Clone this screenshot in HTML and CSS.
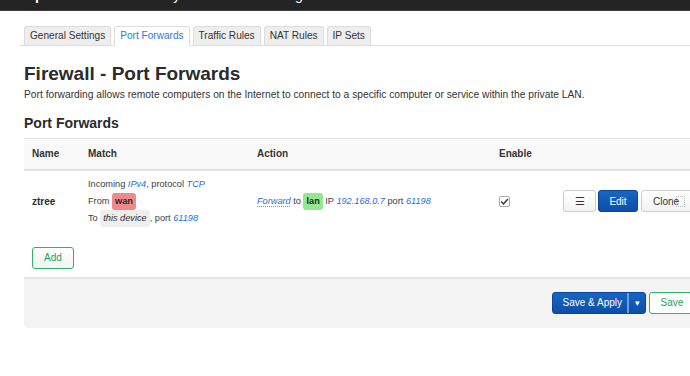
FILE: index.html
```html
<!DOCTYPE html>
<html lang="en">
<head>
<meta charset="utf-8">
<title>Firewall - Port Forwards</title>
<link rel="stylesheet" href="styles.css">
</head>
<body>
<header class="topbar">
  <span class="brand">OpenWrt</span>
  <span class="nav-item nav-system">System</span>
  <span class="nav-item nav-logout">Logout</span>
</header>
<div class="main">
  <ul class="tabs">
    <li class="tab">General Settings</li>
    <li class="tab active">Port Forwards</li>
    <li class="tab">Traffic Rules</li>
    <li class="tab">NAT Rules</li>
    <li class="tab">IP Sets</li>
  </ul>
  <h2 class="page-title">Firewall - Port Forwards</h2>
  <p class="page-desc">Port forwarding allows remote computers on the Internet to connect to a specific computer or service within the private LAN.</p>
  <h3 class="section-title">Port Forwards</h3>
  <table class="table">
    <colgroup>
      <col class="c-name"><col class="c-match"><col class="c-action"><col class="c-enable"><col class="c-btns">
    </colgroup>
    <thead>
      <tr><th>Name</th><th>Match</th><th>Action</th><th>Enable</th><th></th></tr>
    </thead>
    <tbody>
      <tr>
        <td class="name">ztree</td>
        <td class="match">
          <div>Incoming <a class="lnk">IPv4</a>, protocol <a class="lnk">TCP</a></div>
          <div>From <span class="badge wan">wan</span></div>
          <div>To <span class="badge dev">this device</span>, port <a class="lnk">61198</a></div>
        </td>
        <td class="action">
          <a class="lnk fwd">Forward</a> to <span class="badge lan">lan</span> IP <a class="lnk">192.168.0.7</a> port <a class="lnk">61198</a>
        </td>
        <td class="enable"><span class="check"><svg width="9" height="9" viewBox="0 0 9 9"><path d="M1.2 4.6 L3.5 6.9 L7.9 2" fill="none" stroke="#333" stroke-width="1.4"/></svg></span></td>
        <td class="btns">
          <div class="btn-row">
            <button class="btn">&#9776;</button>
            <button class="btn primary">Edit</button>
            <button class="btn clone">Clone<span class="ghost"></span></button>
          </div>
        </td>
      </tr>
    </tbody>
  </table>
  <button class="btn add">Add</button>
  <div class="footer">
    <div class="split">
      <span class="split-main">Save &amp; Apply</span><span class="split-arrow">&#9662;</span>
    </div>
    <button class="btn save">Save</button>
  </div>
</div>
</body>
</html>
```

FILE: styles.css
```css
* { box-sizing: border-box; }
html, body { margin: 0; padding: 0; }
body {
  font-family: "Liberation Sans", Arial, sans-serif;
  color: #404040;
  background: #fff;
  width: 690px;
  height: 376px;
  overflow: hidden;
}
.topbar {
  height: 11px;
  background: #242424;
  border-bottom: 1px solid #3a3a3a;
  overflow: hidden;
  display: flex;
  align-items: flex-start;
  padding-left: 24px;
  color: #fff;
  font-size: 14px;
  line-height: 14px;
}
.topbar span { margin-top: -12px; white-space: nowrap; }
.brand { font-weight: bold; }
.nav-system { margin-left: 81px; }
.nav-logout { margin-left: 69px; }

.main { margin-left: 24px; width: 690px; }

.tabs {
  list-style: none;
  display: flex;
  gap: 3px;
  margin: 15px 0 0 -4px;
  padding: 0 0 0 4px;
  border-bottom: 1px solid #ddd;
}
.tab {
  height: 19px;
  line-height: 18px;
  padding: 0 5px;
  font-size: 10.1px;
  color: #333;
  background: #eee;
  border: 1px solid #ddd;
  border-bottom: 0;
  border-radius: 3px 3px 0 0;
}
.tab.active {
  background: #fff;
  color: #2d7be0;
  height: 20px;
  margin-bottom: -1px;
}

.page-title {
  font-size: 19px;
  line-height: 22px;
  font-weight: bold;
  color: #2b2b2b;
  margin: 17px 0 0;
}
.page-desc {
  font-size: 10.25px;
  line-height: 14px;
  color: #333;
  margin: 3px 0 0;
}
.section-title {
  font-size: 14px;
  line-height: 18px;
  font-weight: bold;
  color: #2b2b2b;
  margin: 12px 0 0;
}

.table {
  border-collapse: collapse;
  table-layout: fixed;
  width: 720px;
  margin-top: 6px;
}
.c-name { width: 56px; }
.c-match { width: 169px; }
.c-action { width: 242px; }
.c-enable { width: 64px; }
.c-btns { width: 189px; }
.table th {
  background: #f9f9f9;
  border-top: 1px solid #e2e2e2;
  border-bottom: 2px solid #e2e2e2;
  height: 31px;
  padding: 0 8px;
  text-align: left;
  font-size: 10px;
  font-weight: bold;
  color: #333;
}
.table td {
  vertical-align: middle;
  padding: 5px 8px 6px;
  font-size: 9.2px;
  color: #404040;
}
.table td.name { font-size: 10px; font-weight: bold; color: #2b2b2b; }
.match div { line-height: 17px; height: 17px; white-space: nowrap; }
.action { white-space: nowrap; line-height: 17px; }
.lnk { color: #1f6fd6; font-style: italic; }
.fwd { text-decoration: underline dotted #5b98e6; text-underline-offset: 2px; }
.badge {
  display: inline-block;
  line-height: 17px;
  padding: 0 3px;
  border-radius: 3px;
  color: #2b2b2b;
}
.badge.wan { background: #f08a8a; font-weight: bold; }
.badge.lan { background: #90e890; font-weight: bold; }
.badge.dev { background: #eee; font-style: italic; }

.check {
  display: inline-flex;
  align-items: center;
  justify-content: center;
  width: 11px;
  height: 11px;
  border: 1px solid #aaa;
  border-radius: 2px;
  background: #fff;
  vertical-align: middle;
}

.btn-row { display: flex; gap: 2px; }
.btn {
  font-family: "Liberation Sans", Arial, sans-serif;
  font-size: 10px;
  height: 22px;
  padding: 0 10px;
  border: 1px solid #ccc;
  border-radius: 3px;
  background: linear-gradient(#fff, #f3f3f3);
  color: #333;
  white-space: nowrap;
}
.btn-row .btn:first-child { width: 33px; padding: 0; font-size: 11px; }
.btn.primary {
  width: 40px;
  padding: 0;
  background: linear-gradient(#1766c4, #0c4ea8);
  border-color: #0a4597;
  color: #fff;
  margin-right: 1px;
}
.btn.clone { width: 60px; padding: 0 0 0 11px; text-align: left; display: flex; align-items: center; }
.ghost {
  display: inline-block;
  width: 9px;
  height: 11px;
  margin-left: -3px;
  border: 1px dotted #bbb;
  border-radius: 1px;
}

.btn.add {
  display: block;
  margin: 14px 0 0 8px;
  width: 42px;
  padding: 0;
  border-color: #2fb26a;
  color: #22a35c;
}

.footer {
  margin-top: 8px;
  border-top: 2px solid #e6e6e6;
  background: #f4f4f4;
  height: 51px;
  display: flex;
  justify-content: flex-end;
  align-items: flex-start;
  padding: 13px 19px 0 0;
  gap: 3px;
  border-radius: 0 0 3px 3px;
}
.split {
  display: flex;
  height: 22px;
  border: 1px solid #0a4597;
  border-radius: 3px;
  background: linear-gradient(#1766c4, #0c4ea8);
  color: #fff;
  font-size: 10px;
  line-height: 20px;
  white-space: nowrap;
}
.split-main { padding: 0 5px 0 10px; }
.split-arrow {
  width: 18px;
  text-align: center;
  border-left: 2px solid #6b9ee0;
  font-size: 9px;
}
.btn.save {
  width: 46px;
  padding: 0;
  border-color: #2fb26a;
  color: #22a35c;
  background: #fff;
}
```
